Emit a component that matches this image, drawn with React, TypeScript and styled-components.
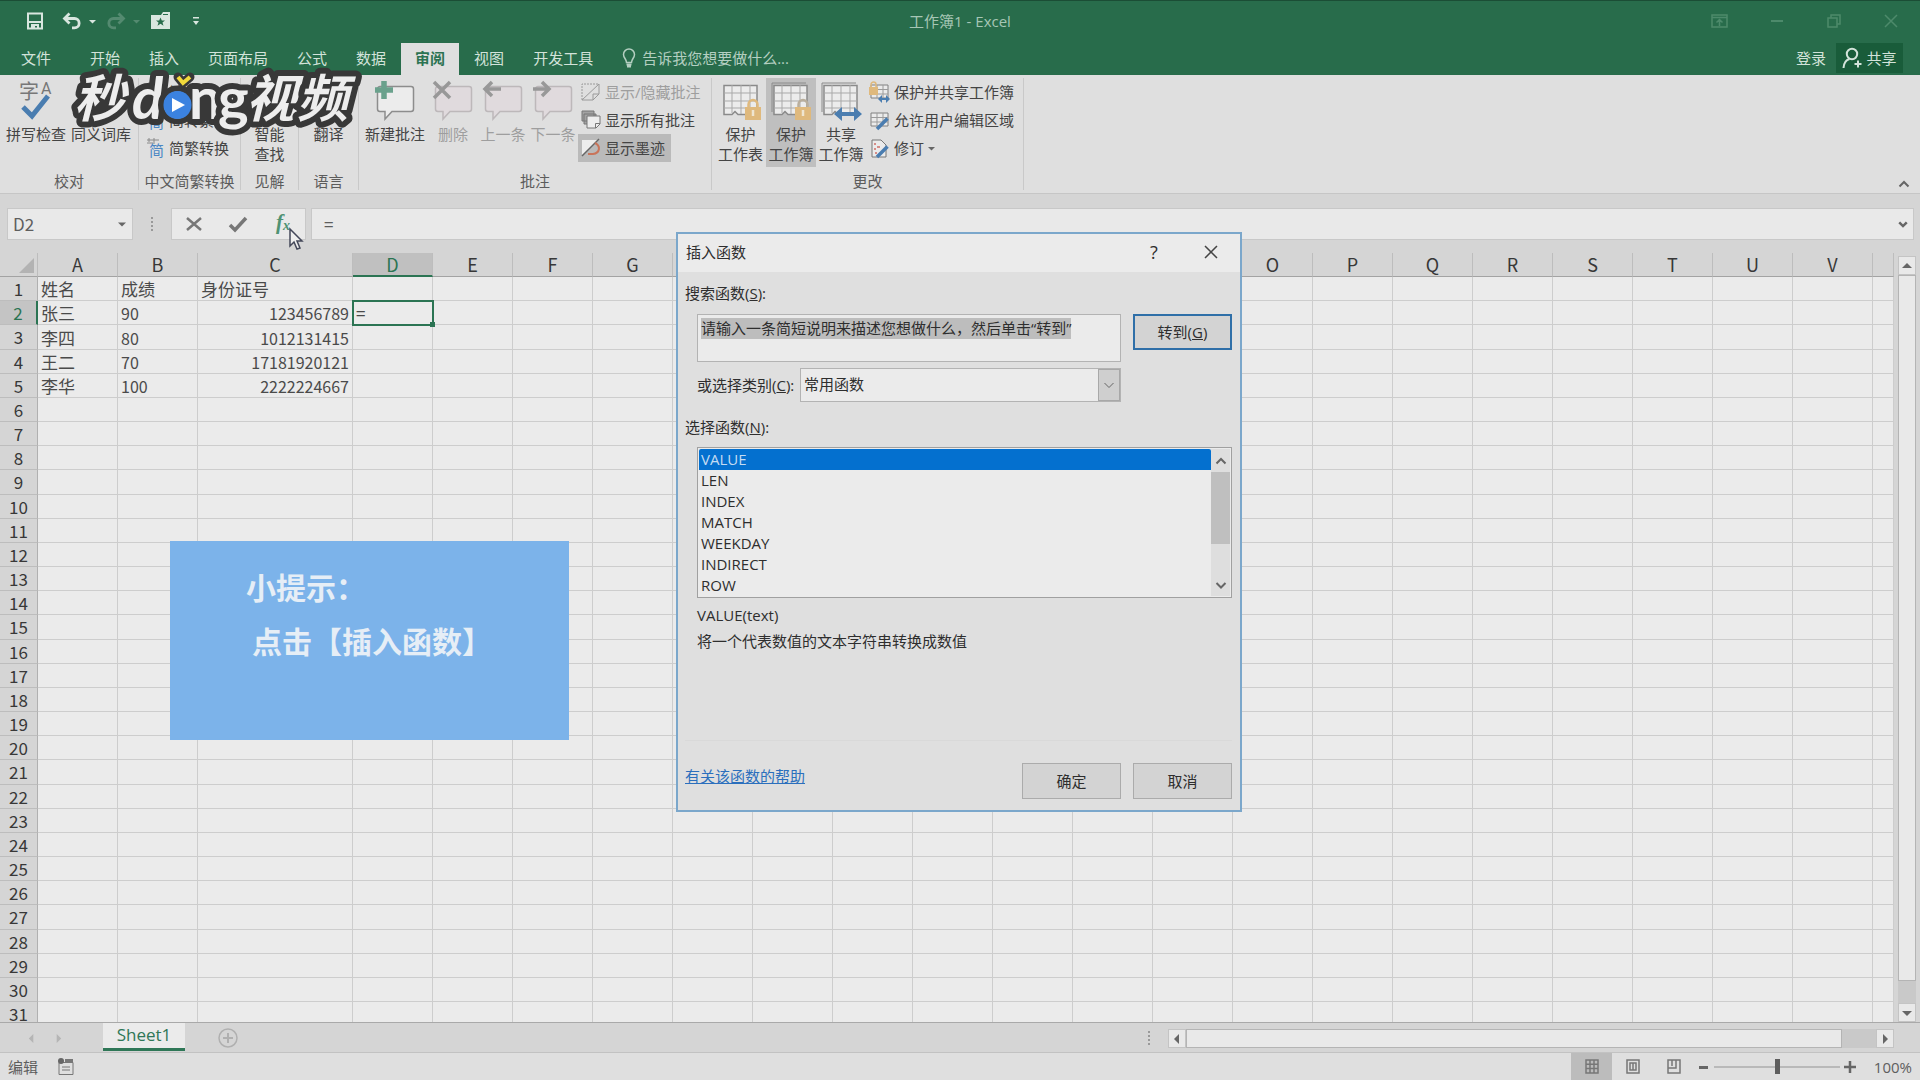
import React, { useEffect, useRef } from "react";
import styled, { createGlobalStyle, css } from "styled-components";

const UI = `"Open Sans", "Noto Sans CJK SC", sans-serif`;
const CELL = `"Noto Sans CJK SC", sans-serif`;

const c = {
  green: "#286c4b",
  greenDark: "#195c3a",
  ribbon: "#dfdfdf",
  frame: "#d5d5d5",
  sheet: "#ebebeb",
  line: "#cdcdcd",
  ink: "#444444",
  dim: "#9e9e9e",
  blue: "#0470cf",
};

const Global = createGlobalStyle`
  *, *::before, *::after { box-sizing: border-box; }
  body { margin: 0; background: ${c.frame}; }
  button, input, select, textarea { font: inherit; color: inherit; margin: 0; }
  svg { display: block; flex: none; overflow: visible; }
`;

const Window = styled.div`
  position: relative;
  display: flex;
  flex-direction: column;
  height: 100vh;
  overflow: hidden;
  font: 15px/20px ${UI};
  color: ${c.ink};
  background: ${c.frame};
`;

const BareButton = styled.button`
  display: flex;
  align-items: center;
  justify-content: center;
  padding: 0;
  border: 0;
  background: none;
  white-space: nowrap;
`;

/* ---------- title bar and tabs ---------- */
const TitleBar = styled.header`
  display: grid;
  grid-template-columns: 1fr auto 1fr;
  align-items: center;
  height: 43px;
  flex: none;
  padding-bottom: 2px;
  background: ${c.green};
  border-top: 1px solid #1b4d35;
  color: #a6c6b5;
`;
const QuickAccess = styled.div`
  display: flex;
  align-items: center;
  padding-left: 26px;
  color: #d9e6df;
`;
const QuickButton = styled(BareButton)<{ $after: number; $faint?: boolean }>`
  margin-right: ${(p) => p.$after}px;
  opacity: ${(p) => (p.$faint ? 0.25 : 1)};
`;
const WindowButtons = styled.div`
  display: flex;
  justify-content: flex-end;
  padding-right: 1px;
  color: #4d8a6b;
`;
const WindowButton = styled(BareButton)`
  width: 57px;
  height: 36px;
`;
const TabRow = styled.nav`
  display: flex;
  align-items: stretch;
  gap: 1px;
  height: 32px;
  flex: none;
  padding: 0 17px 0 7px;
  background: ${c.green};
  color: #d3e3da;
`;
const Tab = styled(BareButton)<{ $on?: boolean; $file?: boolean }>`
  padding: 0 14px 2px;
  margin-right: ${(p) => (p.$file ? 10 : 0)}px;
  ${(p) =>
    p.$on &&
    css`
      background: ${c.ribbon};
      color: #2c7352;
      font-weight: 600;
    `}
`;
const TellMe = styled(BareButton)`
  gap: 6px;
  padding: 0 0 2px 14px;
  margin-right: auto;
  color: #b4cfc1;
`;
const Share = styled(BareButton)`
  gap: 4px;
  width: 67px;
  height: 30px;
  background: ${c.greenDark};
`;
const SignIn = styled(BareButton)`
  padding: 0 9px 2px;
`;

/* ---------- ribbon ---------- */
const Ribbon = styled.section`
  position: relative;
  display: flex;
  height: 119px;
  flex: none;
  padding-top: 3px;
  background: ${c.ribbon};
  border-bottom: 1px solid #c6c6c6;
`;
const Group = styled.div<{ $w: number }>`
  width: ${(p) => p.$w}px;
  height: 112px;
  border-right: 1px solid #c9c9c9;
`;
const GroupBody = styled.div<{ $center?: boolean }>`
  display: flex;
  height: 90px;
  padding-left: ${(p) => (p.$center ? 0 : 3)}px;
  justify-content: ${(p) => (p.$center ? "center" : "flex-start")};
`;
const GroupName = styled.div`
  line-height: 26px;
  text-align: center;
  color: #5c5c5c;
`;
const BigButton = styled(BareButton)<{ $w: number; $on?: boolean; $off?: boolean }>`
  flex-direction: column;
  justify-content: flex-start;
  width: ${(p) => p.$w}px;
  height: 89px;
  padding-top: 2px;
  gap: 4px;
  color: ${(p) => (p.$off ? c.dim : c.ink)};
  background: ${(p) => (p.$on ? "#bfbfbf" : "none")};
`;
const SmallColumn = styled.div`
  display: flex;
  flex-direction: column;
  align-items: flex-start;
`;
const SmallButton = styled(BareButton)<{ $on?: boolean; $off?: boolean }>`
  height: 28px;
  gap: 4px;
  padding: 0 6px 0 3px;
  color: ${(p) => (p.$off ? c.dim : c.ink)};
  background: ${(p) => (p.$on ? "#bababa" : "none")};
`;
const Collapse = styled(BareButton)`
  margin: auto 10px 3px auto;
`;

/* ---------- formula bar ---------- */
const FormulaBar = styled.section`
  display: flex;
  height: 59px;
  flex: none;
  padding: 14px 6px 13px 7px;
`;
const Field = styled.div<{ $w?: number }>`
  display: flex;
  align-items: center;
  height: 32px;
  width: ${(p) => (p.$w ? `${p.$w}px` : "auto")};
  flex: ${(p) => (p.$w ? "none" : "1")};
  border: 1px solid #c8c8c8;
  background: #e9e9e9;
`;
const FieldInput = styled.input<{ $pad: number }>`
  flex: 1;
  min-width: 0;
  height: 28px;
  padding: 0 0 2px ${(p) => p.$pad}px;
  border: 0;
  outline: 0;
  background: none;
  font: 17px/24px ${CELL};
  color: #5e5e5e;
`;
const FieldArrow = styled(BareButton)`
  width: 20px;
  height: 28px;
`;
const Grip = styled.div`
  display: flex;
  align-items: center;
  align-self: stretch;
  justify-content: center;
  width: 38px;
`;
const FormulaActions = styled(Field)`
  margin-right: 5px;
`;
const FormulaButton = styled(BareButton)`
  flex: 1;
  height: 28px;
`;

/* ---------- sheet ---------- */
const SheetArea = styled.main`
  display: flex;
  flex: 1;
  min-height: 0;
  border-bottom: 1px solid #a9a9a9;
`;
const SheetClip = styled.div`
  flex: 1;
  min-width: 0;
  overflow: hidden;
`;
const Grid = styled.table`
  width: 100%;
  table-layout: fixed;
  border-collapse: separate;
  border-spacing: 0;
  font: 18px/22px ${CELL};
  color: #4a4a4a;

  tbody tr { height: 24px; }
  tbody tr:nth-child(6n + 3) { height: 25px; }
`;
const Col = styled.col<{ $w?: number }>`
  width: ${(p) => (p.$w ? `${p.$w}px` : "auto")};
`;
const ColHead = styled.th<{ $on?: boolean }>`
  height: 24px;
  padding: 0;
  border-right: 1px solid #bdbdbd;
  border-bottom: ${(p) => (p.$on ? "2px solid #2b7453" : "1px solid #a3a3a3")};
  background: ${(p) => (p.$on ? "#c0c0c0" : c.frame)};
  color: ${(p) => (p.$on ? "#2b7453" : "#383838")};
  font-weight: 400;
  line-height: 21px;
`;
const Corner = styled(ColHead)`
  vertical-align: bottom;
`;
const RowHead = styled.th<{ $on?: boolean }>`
  padding: 0;
  border-right: ${(p) => (p.$on ? "2px solid #2b7453" : "1px solid #b0b0b0")};
  border-bottom: 1px solid #bdbdbd;
  background: ${(p) => (p.$on ? "#c4c4c4" : c.frame)};
  color: ${(p) => (p.$on ? "#2b7453" : "#383838")};
  font-size: 17px;
  font-weight: 400;
`;
const Cell = styled.td<{ $num?: boolean; $right?: boolean; $on?: boolean }>`
  position: relative;
  padding: 1px 3px 0;
  border-right: 1px solid ${c.line};
  border-bottom: 1px solid ${c.line};
  background: ${c.sheet};
  font-size: ${(p) => (p.$num ? 16 : 17)}px;
  text-align: ${(p) => (p.$right ? "right" : "left")};
  white-space: nowrap;
  ${(p) =>
    p.$on &&
    css`
      z-index: 1;
      outline: 2px solid #2b7453;
      outline-offset: -1px;
      &::after {
        content: "";
        position: absolute;
        right: -3px;
        bottom: -3px;
        width: 5px;
        height: 5px;
        background: #2b7453;
      }
    `}
`;
const VScroll = styled.div`
  display: flex;
  flex-direction: column;
  width: 26px;
  flex: none;
  padding: 3px 4px 0;
`;
const Rail = styled.div<{ $across?: boolean }>`
  display: flex;
  flex-direction: ${(p) => (p.$across ? "row" : "column")};
  flex: 1;
  background: #c9c9c9;
`;
const ScrollButton = styled(BareButton)`
  width: 18px;
  height: 19px;
  flex: none;
  background: #e9e9e9;
  border: 1px solid #c4c4c4;
`;
const Thumb = styled.div<{ $share: number }>`
  flex: 0 0 ${(p) => p.$share}%;
  background: #e9e9e9;
  border: 1px solid #b4b4b4;
`;

/* ---------- sheet tabs and status ---------- */
const SheetTabs = styled.footer`
  display: flex;
  align-items: flex-start;
  height: 30px;
  flex: none;
  padding-right: 26px;
  border-bottom: 1px solid #c2c2c2;
`;
const SheetNav = styled.div`
  display: flex;
  width: 103px;
  height: 30px;
  align-items: center;
  gap: 18px;
  padding-left: 27px;
`;
const SheetTab = styled(BareButton)`
  width: 82px;
  height: 28px;
  padding-bottom: 1px;
  background: ${c.sheet};
  border-bottom: 3px solid #2f7757;
  color: #2f7757;
  font-size: 17px;
`;
const AddSheet = styled(BareButton)`
  height: 30px;
  margin: 0 auto 0 33px;
`;
const HScroll = styled.div`
  display: flex;
  align-items: stretch;
  flex: 0 1 726px;
  height: 19px;
  margin-top: 6px;
`;
const StatusBar = styled.footer`
  display: flex;
  align-items: center;
  height: 27px;
  flex: none;
  gap: 20px;
  padding: 0 8px;
  background: ${c.ribbon};
  color: #5e5e5e;
`;
const StatusTools = styled.div`
  display: flex;
  align-items: center;
  height: 27px;
  margin-left: auto;
`;
const ViewButton = styled(BareButton)<{ $on?: boolean }>`
  width: 41px;
  height: 27px;
  background: ${(p) => (p.$on ? "#bcbcbc" : "none")};
`;
const ZoomOut = styled(BareButton)`
  margin-left: 2px;
`;
const ZoomSlider = styled.input`
  appearance: none;
  width: 126px;
  height: 18px;
  margin: 0 4px;
  background: linear-gradient(#b9b9b9, #b9b9b9) center / 100% 2px no-repeat;
  &::-webkit-slider-thumb {
    appearance: none;
    width: 5px;
    height: 15px;
    background: #5e5e5e;
  }
`;
const ZoomValue = styled.span`
  width: 56px;
  text-align: right;
`;

/* ---------- insert function dialog ---------- */
const Dialog = styled.div`
  position: absolute;
  left: 676px;
  top: 232px;
  z-index: 5;
  width: 566px;
  border: 2px solid #7ba7cb;
  background: ${c.ribbon};
  color: #2e2e2e;
  line-height: 21px;
`;
const DialogTitle = styled.div`
  display: flex;
  align-items: center;
  height: 38px;
  padding: 0 9px 2px 8px;
  background: #ebebeb;
`;
const DialogTitleButton = styled(BareButton)<{ $push?: boolean }>`
  width: 40px;
  height: 36px;
  margin: 0 ${(p) => (p.$push ? 17 : 0)}px 0 ${(p) => (p.$push ? "auto" : 0)};
  font-size: 18px;
`;
const DialogBody = styled.div`
  padding: 11px 8px 11px 7px;
`;
const Row = styled.div<{ $top?: number; $indent?: boolean; $middle?: boolean }>`
  display: flex;
  align-items: ${(p) => (p.$middle ? "center" : "flex-start")};
  margin-top: ${(p) => p.$top ?? 0}px;
  padding-left: ${(p) => (p.$indent ? 12 : 0)}px;
`;
const SearchBox = styled.textarea`
  width: 424px;
  height: 48px;
  padding: 3px 3px;
  border: 1px solid #b3b3b3;
  outline: 0;
  resize: none;
  overflow: hidden;
  background: #ebebeb;
  line-height: 21px;
  &::selection { background: #bdbdbd; color: #2e2e2e; }
`;
const PushButton = styled.button<{ $main?: boolean }>`
  width: 99px;
  height: 36px;
  padding: 0;
  margin-left: 12px;
  border: ${(p) => (p.$main ? "2px solid #2f6fa8" : "1px solid #ababab")};
  background: #d3d3d3;
`;
const CategoryWrap = styled.div`
  display: flex;
  width: 321px;
  height: 34px;
  margin-left: auto;
  margin-right: 111px;
  border: 1px solid #b3b3b3;
  background: #ebebeb;
`;
const CategorySelect = styled.select`
  appearance: none;
  flex: 1;
  padding: 0 3px 1px;
  border: 0;
  outline: 0;
  background: none;
`;
const CategoryArrow = styled.span`
  display: grid;
  place-items: center;
  width: 22px;
  background: #cfcfcf;
  border: 1px solid #a8a8a8;
  pointer-events: none;
`;
const ListWrap = styled.div`
  display: flex;
  flex: 1;
  height: 151px;
  padding: 1px;
  border: 1px solid #a0a0a0;
  background: #ebebeb;
`;
const FunctionList = styled.select`
  flex: 1;
  height: 147px;
  padding: 0;
  border: 0;
  outline: 0;
  overflow: hidden;
  background: none;
  scrollbar-width: none;
  option {
    height: 21px;
    min-height: 21px;
    padding: 0 2px;
    line-height: 21px;
    color: #2e2e2e;
  }
  option:checked {
    background: linear-gradient(${c.blue}, ${c.blue});
    -webkit-text-fill-color: #c5dcf2;
  }
`;
const ListScroll = styled.div`
  display: flex;
  flex-direction: column;
  width: 19px;
  background: #dedede;
`;
const ListThumb = styled.div`
  height: 72px;
  background: #bfbfbf;
`;
const ListArrow = styled(BareButton)<{ $end?: boolean }>`
  height: 23px;
  margin-top: ${(p) => (p.$end ? "auto" : 0)};
`;
const Help = styled.div`
  min-height: 136px;
  margin-top: 7px;
  padding-left: 12px;
  border-bottom: 1px solid #d9d9d9;
  p { margin: 0 0 5px; }
`;
const HelpLink = styled.a`
  margin-right: auto;
  line-height: 26px;
  color: #2b6fbd;
  text-decoration: underline;
`;

/* ---------- overlays ---------- */
const Tip = styled.aside`
  position: absolute;
  left: 170px;
  top: 541px;
  z-index: 3;
  width: 399px;
  height: 199px;
  padding: 18px 0 0 76px;
  background: #7cb3ea;
  color: #e6eef6;
  font: 700 30px/54px ${CELL};
  p { margin: 0; }
  p + p { padding-left: 6px; }
`;
const Watermark = styled.svg`
  position: absolute;
  left: 64px;
  top: 66px;
  z-index: 4;
  pointer-events: none;
`;
const Pointer = styled.svg`
  position: absolute;
  left: 288px;
  top: 228px;
  z-index: 4;
`;

/* ---------- icons ---------- */
const Tri = ({ d, s = 8, fill = "#666" }: { d: "up" | "down" | "left" | "right"; s?: number; fill?: string }) => {
  const p = { up: "M0 7 5 2 10 7Z", down: "M0 3 5 8 10 3Z", left: "M7 0 2 5 7 10Z", right: "M3 0 8 5 3 10Z" }[d];
  return (
    <svg width={s} height={s} viewBox="0 0 10 10"><path d={p} fill={fill} /></svg>
  );
};
const Chevron = ({ up, w = 2, s = 12 }: { up?: boolean; w?: number; s?: number }) => (
  <svg width={s} height={s} viewBox="0 0 12 12" fill="none" stroke="#666" strokeWidth={w}>
    <path d={up ? "M1.500 8.500 6 4l4.500 4.500" : "M1.500 4 6 8.500 10.500 4"} />
  </svg>
);
const Dots = () => (
  <svg width="4" height="16" viewBox="0 0 4 16" fill="#999">
    <path d="M1 1h2v2H1zM1 5h2v2H1zM1 9h2v2H1zM1 13h2v2H1z" />
  </svg>
);
const SaveIcon = () => (
  <svg width="18" height="18" viewBox="0 0 18 18">
    <path d="M2 1.500h14v15H2z" fill="none" stroke="currentColor" strokeWidth="2" />
    <path d="M2 9h14v2H2zM5 12h8v5h-2v-3H9v3H5z" fill="currentColor" />
  </svg>
);
const UndoIcon = ({ flip }: { flip?: boolean }) => (
  <svg width="20" height="18" viewBox="0 0 20 18">
    <g transform={flip ? "translate(20 0) scale(-1 1)" : undefined} fill="none" stroke="currentColor" strokeWidth="2.800">
      <path d="M3 6.500h9.500a4.600 4.600 0 0 1 0 9.300H10" />
      <path d="M7.500 1.500 2.500 6.500l5 5" />
    </g>
  </svg>
);
const FolderStar = () => (
  <svg width="19" height="18" viewBox="0 0 19 18">
    <path d="M0 3h10l2-3h7v17H0z" fill="currentColor" />
    <path d="M12 2.500h5" stroke={c.green} />
    <path d="m9.500 5.500 1.300 3h3.200l-2.500 2 1 3.200-3-1.900-3 1.900 1-3.200-2.500-2h3.200z" fill={c.green} />
  </svg>
);
const MoreIcon = () => (
  <svg width="8" height="10" viewBox="0 0 8 10" fill="currentColor"><path d="M1 1h6v1.500H1zM1 5h6L4 9z" /></svg>
);
const Bulb = () => (
  <svg width="14" height="21" viewBox="0 0 14 21" fill="none" stroke="currentColor" strokeWidth="1.500">
    <path d="M4.500 14.500C4.500 11 1.500 10 1.500 6.500a5.500 5.500 0 0 1 11 0c0 3.500-3 4.500-3 8z" />
    <path d="M4.500 16.500h5M5 18.500h4" strokeWidth="2" />
  </svg>
);
const Person = () => (
  <svg width="20" height="22" viewBox="0 0 20 22" fill="none" stroke="currentColor" strokeWidth="2">
    <circle cx="10" cy="7" r="5.200" />
    <path d="M1.500 21c.3-5 2.500-8 6-9M12.500 17h7M16 13.500v7" />
  </svg>
);
const SpellIcon = () => (
  <svg width="36" height="40" viewBox="0 0 36 40">
    <text x="1" y="19" fontSize="20" fontFamily={CELL} fill="#777">字</text>
    <text x="23" y="14" fontSize="16" fontFamily="Roboto" fill="#777">A</text>
    <path d="m5 27 9 9 16-20" fill="none" stroke="#4a7db0" strokeWidth="5" />
  </svg>
);
const BookIcon = () => (
  <svg width="34" height="40" viewBox="0 0 34 40"><path d="M6 6h20v22H6z" fill="#d9d9d9" stroke="#888" /></svg>
);
const BlankIcon = () => <svg width="40" height="40" />;
const NoteIcon = ({ kind }: { kind: "add" | "del" | "prev" | "next" }) => {
  const off = kind !== "add";
  const marks = {
    add: <path d="M9 1v18M0 10h18" stroke="#6aa18c" strokeWidth="5.500" />,
    del: <path d="m1 2 16 16M17 2 1 18" stroke="#989898" strokeWidth="3.500" />,
    prev: <path d="M18 9H3M9 2 2 9l7 7" stroke="#989898" strokeWidth="3.500" />,
    next: <path d="M0 9h15M9 2l7 7-7 7" stroke="#989898" strokeWidth="3.500" />,
  };
  return (
    <svg width="40" height="40" viewBox="0 0 40 40" fill="none">
      <path
        d="M5 6.500h31a2.500 2.500 0 0 1 2.500 2.500v20a2.500 2.500 0 0 1-2.500 2.500H17L10 39v-7.500H5A2.500 2.500 0 0 1 2.500 29V9A2.500 2.500 0 0 1 5 6.500z"
        fill={off ? "#e0dadd" : "#ececec"} stroke={off ? "#bdb8ba" : "#8d8d8d"} strokeWidth="1.500"
      />
      {marks[kind]}
    </svg>
  );
};
const BookGrid = ({ kind }: { kind: "sheet" | "book" | "share" }) => (
  <svg width="40" height="40" viewBox="0 0 40 40" fill="none">
    {kind !== "sheet" && <path d="M1 32V3h34" stroke="#8a8a8a" />}
    <path d="M3 5.500h33v29H17l-3-3-3 3H3z" fill="#ececec" stroke="#8a8a8a" strokeWidth="1.500" />
    <path d="M3 13h33M3 21h33M3 28h33M11 5v28M20 5v29M29 5v29" stroke="#a9a9a9" />
    {kind === "share" ? (
      <>
        <path d="M18 34h19" stroke="#4a7db0" strokeWidth="4" />
        <path d="m21 27-8 7 8 7zM33 27l8 7-8 7z" fill="#4a7db0" />
      </>
    ) : (
      <>
        <path d="M27.500 28v-3.500a4.500 4.500 0 0 1 9 0V28" stroke={kind === "book" ? "#b9ae9c" : "#dfb97d"} strokeWidth="2.500" />
        <path d="M24 27h16v13H24z" fill="#dfb97d" />
        <path d="M32 30v6" stroke="#efe5d0" strokeWidth="2.500" />
      </>
    )}
  </svg>
);
const ConvertIcon = () => (
  <svg width="20" height="22" viewBox="0 0 20 22">
    <path d="M2 3h12M4 1v4M9 1v4M2 6h8" stroke="#8a8a8a" />
    <text x="4" y="19" fontSize="15" fontFamily={CELL} fill="#4a86c4">简</text>
  </svg>
);
const NotesHide = () => (
  <svg width="20" height="20" viewBox="0 0 20 20" fill="none" stroke="#9a9a9a">
    <path d="M1 18V2h17" strokeDasharray="2 1" /><path d="M1 18 18 2v10l-6 6zM12 18v-6h6" />
  </svg>
);
const NotesAll = () => (
  <svg width="20" height="20" viewBox="0 0 20 20" stroke="#777">
    <path d="M1 1h12v10H1zM3 4h12v10H3z" fill="#a3a3a3" /><path d="M6 6h13v8l-4 4H6zM14.500 18v-4.500H19" fill="#ededed" />
  </svg>
);
const InkIcon = () => (
  <svg width="20" height="20" viewBox="0 0 20 20" fill="none">
    <path d="M1 2h16L1 17z" fill="#ededed" /><path d="M1 18 18 1" stroke="#666" strokeWidth="1.500" />
    <path d="M14 5c6 3 5 10-2 11H7" stroke="#c9745a" strokeWidth="2" />
  </svg>
);
const MiniGrid = ({ kind }: { kind: "lock" | "edit" | "track" }) => (
  <svg width="21" height="21" viewBox="0 0 21 21" fill="none">
    {kind === "track" ? (
      <>
        <path d="M3 2h9l5 5v12H3z" fill="#ebebeb" stroke="#777" />
        <path d="M5 6h2m1 3h3M5 11h2m-1 4h2" stroke="#cf6f68" strokeWidth="1.500" />
      </>
    ) : (
      <>
        <path d="M2 3h17v13H2z" fill="#ebebeb" stroke="#808080" />
        <path d="M2 7.500h17M2 12h17M8 3v13M14 3v13" stroke="#9b9b9b" />
      </>
    )}
    {kind === "lock" ? (
      <>
        <path d="M0 5h9v8H0z" fill="#dfb97d" /><path d="M2 5V2.500a2.500 2.500 0 0 1 5 0V5" stroke="#dfb97d" strokeWidth="1.500" />
        <path d="M12 17h7" stroke="#4a7db0" strokeWidth="2" /><path d="m13 13-4 4 4 4zM17 13l4 4-4 4z" fill="#4a7db0" />
      </>
    ) : (
      <path d="M8 19 18.500 8.500" stroke="#4a7db0" strokeWidth="3.500" />
    )}
  </svg>
);

const Logo = () => (
  <Watermark width="304" height="78" viewBox="64 66 304 78" aria-label="秒dong视频">
    <g stroke="#383838" strokeWidth="12" strokeLinejoin="round" paintOrder="stroke" fill="#ededed" fontWeight="700">
      <g fontFamily={CELL} fontSize="51" fontStyle="italic">
        <text x="74" y="117">秒</text>
        <text x="246" y="117">视</text>
        <text x="297" y="117">频</text>
      </g>
      <g fontFamily="Lato, sans-serif" fontSize="58">
        <text x="132" y="119" fontStyle="italic">d</text>
        <circle cx="177.500" cy="105" r="13.500" />
        <text x="189" y="119">n</text>
        <text x="218" y="119">g</text>
      </g>
    </g>
    <circle cx="177.500" cy="105" r="14" fill="#3b82e0" />
    <path d="M172 98v14l13-7z" fill="#fff" />
    <path d="m178 77 5 6 7-6" fill="none" stroke="#383838" strokeWidth="9" strokeLinecap="round" />
    <path d="m178 77 5 6 7-6" fill="none" stroke="#f2d93b" strokeWidth="4" />
  </Watermark>
);

/* ---------- data ---------- */
const COLUMNS = "ABCDEFGHIJKLMNOPQRSTUV".split("");
const DATA: Record<number, string[]> = {
  1: ["姓名", "成绩", "身份证号"],
  2: ["张三", "90", "123456789", "="],
  3: ["李四", "80", "1012131415"],
  4: ["王二", "70", "17181920121"],
  5: ["李华", "100", "2222224667"],
};
const FUNCTIONS = ["VALUE", "LEN", "INDEX", "MATCH", "WEEKDAY", "INDIRECT", "ROW"];
const TABS = ["开始", "插入", "页面布局", "公式", "数据", "审阅", "视图", "开发工具"];

const Sheet = () => (
  <Grid>
    <colgroup>
      <Col $w={38} />
      {COLUMNS.map((n) => <Col key={n} $w={n === "C" ? 155 : 80} />)}
      <Col />
    </colgroup>
    <thead>
      <tr>
        <Corner aria-label="全选">
          <svg width="35" height="20" viewBox="0 0 35 20"><path d="M34 2v15H19z" fill="#b3b3b3" /></svg>
        </Corner>
        {COLUMNS.map((n) => <ColHead key={n} $on={n === "D"}>{n}</ColHead>)}
        <ColHead />
      </tr>
    </thead>
    <tbody>
      {Array.from({ length: 31 }, (_, i) => i + 1).map((r) => (
        <tr key={r}>
          <RowHead $on={r === 2}>{r}</RowHead>
          {COLUMNS.map((n, j) => {
            const v = DATA[r]?.[j] ?? "";
            return (
              <Cell key={n} $num={/^\d/.test(v)} $right={n === "C" && r > 1} $on={n === "D" && r === 2}>
                {v}
              </Cell>
            );
          })}
          <Cell />
        </tr>
      ))}
    </tbody>
  </Grid>
);

const InsertFunction = () => {
  const search = useRef<HTMLTextAreaElement>(null);
  useEffect(() => {
    search.current?.focus({ preventScroll: true });
    search.current?.select();
  }, []);
  return (
    <Dialog role="dialog" aria-labelledby="dlg-title">
      <DialogTitle>
        <span id="dlg-title">插入函数</span>
        <DialogTitleButton $push>?</DialogTitleButton>
        <DialogTitleButton aria-label="关闭">
          <svg width="14" height="14" viewBox="0 0 14 14" stroke="#444" strokeWidth="1.500"><path d="m1 1 12 12M13 1 1 13" /></svg>
        </DialogTitleButton>
      </DialogTitle>
      <DialogBody>
        <Row><label htmlFor="search">搜索函数(<u>S</u>):</label></Row>
        <Row $top={10} $indent>
          <SearchBox id="search" ref={search} defaultValue="请输入一条简短说明来描述您想做什么，然后单击“转到”" spellCheck={false} />
          <PushButton $main>转到(<u>G</u>)</PushButton>
        </Row>
        <Row $top={6} $indent $middle>
          <label htmlFor="category">或选择类别(<u>C</u>):</label>
          <CategoryWrap>
            <CategorySelect id="category" defaultValue="常用函数">
              <option>常用函数</option>
            </CategorySelect>
            <CategoryArrow><Chevron w={1} /></CategoryArrow>
          </CategoryWrap>
        </Row>
        <Row $top={15}><label htmlFor="functions">选择函数(<u>N</u>):</label></Row>
        <Row $top={9} $indent>
          <ListWrap>
            <FunctionList id="functions" size={7} defaultValue="VALUE">
              {FUNCTIONS.map((f) => <option key={f}>{f}</option>)}
            </FunctionList>
            <ListScroll>
              <ListArrow aria-label="向上"><Chevron up /></ListArrow>
              <ListThumb />
              <ListArrow aria-label="向下" $end><Chevron /></ListArrow>
            </ListScroll>
          </ListWrap>
        </Row>
        <Help>
          <p>VALUE(text)</p>
          <p>将一个代表数值的文本字符串转换成数值</p>
        </Help>
        <Row $top={22}>
          <HelpLink href="#help">有关该函数的帮助</HelpLink>
          <PushButton>确定</PushButton>
          <PushButton>取消</PushButton>
        </Row>
      </DialogBody>
    </Dialog>
  );
};

export default function App() {
  return (
    <Window>
      <Global />
      <TitleBar>
        <QuickAccess>
          <QuickButton $after={18} aria-label="保存"><SaveIcon /></QuickButton>
          <QuickButton $after={7} aria-label="撤消"><UndoIcon /></QuickButton>
          <QuickButton $after={10} aria-label="撤消列表"><Tri d="down" s={7} fill="#d9e6df" /></QuickButton>
          <QuickButton $after={7} $faint aria-label="恢复"><UndoIcon flip /></QuickButton>
          <QuickButton $after={11} $faint aria-label="恢复列表"><Tri d="down" s={7} fill="#d9e6df" /></QuickButton>
          <QuickButton $after={22} aria-label="收藏"><FolderStar /></QuickButton>
          <QuickButton $after={0} aria-label="自定义"><MoreIcon /></QuickButton>
        </QuickAccess>
        <span>工作簿1 - Excel</span>
        <WindowButtons>
          <WindowButton aria-label="功能区显示选项">
            <svg width="17" height="14" viewBox="0 0 17 14" fill="none" stroke="currentColor" strokeWidth="1.500"><path d="M1 1h15v12H1zM1 3.500h15M8.500 12V6M5.500 8.500l3-3 3 3" /></svg>
          </WindowButton>
          <WindowButton aria-label="最小化">
            <svg width="12" height="12" viewBox="0 0 12 12"><path d="M0 5h12v2H0z" fill="currentColor" /></svg>
          </WindowButton>
          <WindowButton aria-label="还原">
            <svg width="14" height="14" viewBox="0 0 14 14" fill="none" stroke="currentColor" strokeWidth="1.500"><path d="M1 4h9v9H1zM4 4V1h9v9h-3" /></svg>
          </WindowButton>
          <WindowButton aria-label="关闭">
            <svg width="14" height="14" viewBox="0 0 14 14" stroke="currentColor" strokeWidth="1.500"><path d="m1 1 12 12M13 1 1 13" /></svg>
          </WindowButton>
        </WindowButtons>
      </TitleBar>
      <TabRow>
        <Tab $file>文件</Tab>
        {TABS.map((t) => <Tab key={t} $on={t === "审阅"}>{t}</Tab>)}
        <TellMe><Bulb />告诉我您想要做什么...</TellMe>
        <SignIn>登录</SignIn>
        <Share><Person />共享</Share>
      </TabRow>

      <Ribbon>
        <Group $w={139}>
          <GroupBody>
            <BigButton $w={66}><SpellIcon />拼写检查</BigButton>
            <BigButton $w={64}><BookIcon />同义词库</BigButton>
          </GroupBody>
          <GroupName>校对</GroupName>
        </Group>
        <Group $w={102}>
          <GroupBody>
            <SmallColumn>
              <SmallButton><ConvertIcon />繁转简</SmallButton>
              <SmallButton><ConvertIcon />简转繁</SmallButton>
              <SmallButton><ConvertIcon />简繁转换</SmallButton>
            </SmallColumn>
          </GroupBody>
          <GroupName>中文简繁转换</GroupName>
        </Group>
        <Group $w={58}>
          <GroupBody $center>
            <BigButton $w={50}><BlankIcon /><span>智能<br />查找</span></BigButton>
          </GroupBody>
          <GroupName>见解</GroupName>
        </Group>
        <Group $w={60}>
          <GroupBody $center>
            <BigButton $w={50}><BlankIcon />翻译</BigButton>
          </GroupBody>
          <GroupName>语言</GroupName>
        </Group>
        <Group $w={353}>
          <GroupBody>
            <BigButton $w={66}><NoteIcon kind="add" />新建批注</BigButton>
            <BigButton $w={50} $off><NoteIcon kind="del" />删除</BigButton>
            <BigButton $w={50} $off><NoteIcon kind="prev" />上一条</BigButton>
            <BigButton $w={50} $off><NoteIcon kind="next" />下一条</BigButton>
            <SmallColumn>
              <SmallButton $off><NotesHide />显示/隐藏批注</SmallButton>
              <SmallButton><NotesAll />显示所有批注</SmallButton>
              <SmallButton $on><InkIcon />显示墨迹</SmallButton>
            </SmallColumn>
          </GroupBody>
          <GroupName>批注</GroupName>
        </Group>
        <Group $w={312}>
          <GroupBody>
            <BigButton $w={51}><BookGrid kind="sheet" /><span>保护<br />工作表</span></BigButton>
            <BigButton $w={50} $on><BookGrid kind="book" /><span>保护<br />工作簿</span></BigButton>
            <BigButton $w={50}><BookGrid kind="share" /><span>共享<br />工作簿</span></BigButton>
            <SmallColumn>
              <SmallButton><MiniGrid kind="lock" />保护并共享工作簿</SmallButton>
              <SmallButton><MiniGrid kind="edit" />允许用户编辑区域</SmallButton>
              <SmallButton><MiniGrid kind="track" />修订<Tri d="down" s={7} /></SmallButton>
            </SmallColumn>
          </GroupBody>
          <GroupName>更改</GroupName>
        </Group>
        <Collapse aria-label="折叠功能区"><Chevron up /></Collapse>
      </Ribbon>

      <FormulaBar>
        <Field $w={126}>
          <FieldInput $pad={5} aria-label="名称框" defaultValue="D2" />
          <FieldArrow aria-label="名称列表"><Tri d="down" /></FieldArrow>
        </Field>
        <Grip><Dots /></Grip>
        <FormulaActions $w={135}>
          <FormulaButton aria-label="取消">
            <svg width="16" height="14" viewBox="0 0 16 14" stroke="#777" strokeWidth="2.500"><path d="m1 1 14 12M15 1 1 13" /></svg>
          </FormulaButton>
          <FormulaButton aria-label="输入">
            <svg width="18" height="15" viewBox="0 0 18 15" fill="none" stroke="#777" strokeWidth="3.500"><path d="m1 8 5 5L17 1" /></svg>
          </FormulaButton>
          <FormulaButton aria-label="插入函数">
            <svg width="20" height="22" viewBox="0 0 20 22" fill="#4f9273" fontFamily="Liberation Serif, serif" fontStyle="italic" fontWeight="700">
              <text x="3" y="16" fontSize="21">f</text>
              <text x="10" y="17" fontSize="14">x</text>
            </svg>
          </FormulaButton>
        </FormulaActions>
        <Field>
          <FieldInput $pad={12} aria-label="编辑栏" defaultValue="=" />
          <FieldArrow aria-label="展开编辑栏"><Chevron w={3} s={10} /></FieldArrow>
        </Field>
      </FormulaBar>

      <SheetArea>
        <SheetClip><Sheet /></SheetClip>
        <VScroll>
          <ScrollButton aria-label="向上滚动"><Tri d="up" s={10} /></ScrollButton>
          <Rail><Thumb $share={97} /></Rail>
          <ScrollButton aria-label="向下滚动"><Tri d="down" s={10} /></ScrollButton>
        </VScroll>
      </SheetArea>

      <SheetTabs>
        <SheetNav><Tri d="left" s={9} fill="#b5b5b5" /><Tri d="right" s={9} fill="#b5b5b5" /></SheetNav>
        <SheetTab>Sheet1</SheetTab>
        <AddSheet aria-label="新工作表">
          <svg width="20" height="20" viewBox="0 0 20 20" fill="none" stroke="#b0b0b0" strokeWidth="1.500"><circle cx="10" cy="10" r="9" /><path d="M10 5v10M5 10h10" strokeWidth="2" /></svg>
        </AddSheet>
        <Grip><Dots /></Grip>
        <HScroll>
          <ScrollButton aria-label="向左滚动"><Tri d="left" s={10} /></ScrollButton>
          <Rail $across><Thumb $share={95} /></Rail>
          <ScrollButton aria-label="向右滚动"><Tri d="right" s={10} /></ScrollButton>
        </HScroll>
      </SheetTabs>

      <StatusBar>
        <span>编辑</span>
        <svg width="16" height="17" viewBox="0 0 16 17" fill="none" stroke="#777"><path d="M1 4.500h14v12H1zM4 9h8M4 12h8" /><circle cx="3" cy="3" r="3" fill="#666" stroke="none" /><path d="M7 2.500h8" strokeWidth="3" /></svg>
        <StatusTools>
          <ViewButton $on aria-label="普通">
            <svg width="14" height="15" viewBox="0 0 14 15" fill="none" stroke="#777" strokeWidth="1.500"><path d="M1 1h12v13H1zM1 5.300h12M1 9.600h12M5 1v13M9 1v13" /></svg>
          </ViewButton>
          <ViewButton aria-label="页面布局">
            <svg width="14" height="15" viewBox="0 0 14 15" fill="none" stroke="#777" strokeWidth="1.500"><path d="M1 1h12v13H1zM4 4h6v7H4zM7 4v7" /></svg>
          </ViewButton>
          <ViewButton aria-label="分页预览">
            <svg width="14" height="15" viewBox="0 0 14 15" fill="none" stroke="#777" strokeWidth="1.500"><path d="M1 1h12v13H1zM1 9h8V1M5 1v6" /></svg>
          </ViewButton>
          <ZoomOut aria-label="缩小">
            <svg width="14" height="14" viewBox="0 0 14 14"><path d="M3 6h9v3H3z" fill="#666" /></svg>
          </ZoomOut>
          <ZoomSlider type="range" min="0" max="100" defaultValue="50" aria-label="缩放" />
          <BareButton aria-label="放大">
            <svg width="12" height="14" viewBox="0 0 12 14" stroke="#666" strokeWidth="2.500"><path d="M0 7h12M6 1v12" /></svg>
          </BareButton>
          <ZoomValue>100%</ZoomValue>
        </StatusTools>
      </StatusBar>

      <Tip>
        <p>小提示：</p>
        <p>点击【插入函数】</p>
      </Tip>
      <Logo />
      <Pointer width="18" height="24" viewBox="0 0 18 24">
        <path d="M2 1v17l4-4 3 7 3-1-3-7h5z" fill="#efefef" stroke="#44485a" strokeWidth="1.500" />
      </Pointer>
      <InsertFunction />
    </Window>
  );
}
